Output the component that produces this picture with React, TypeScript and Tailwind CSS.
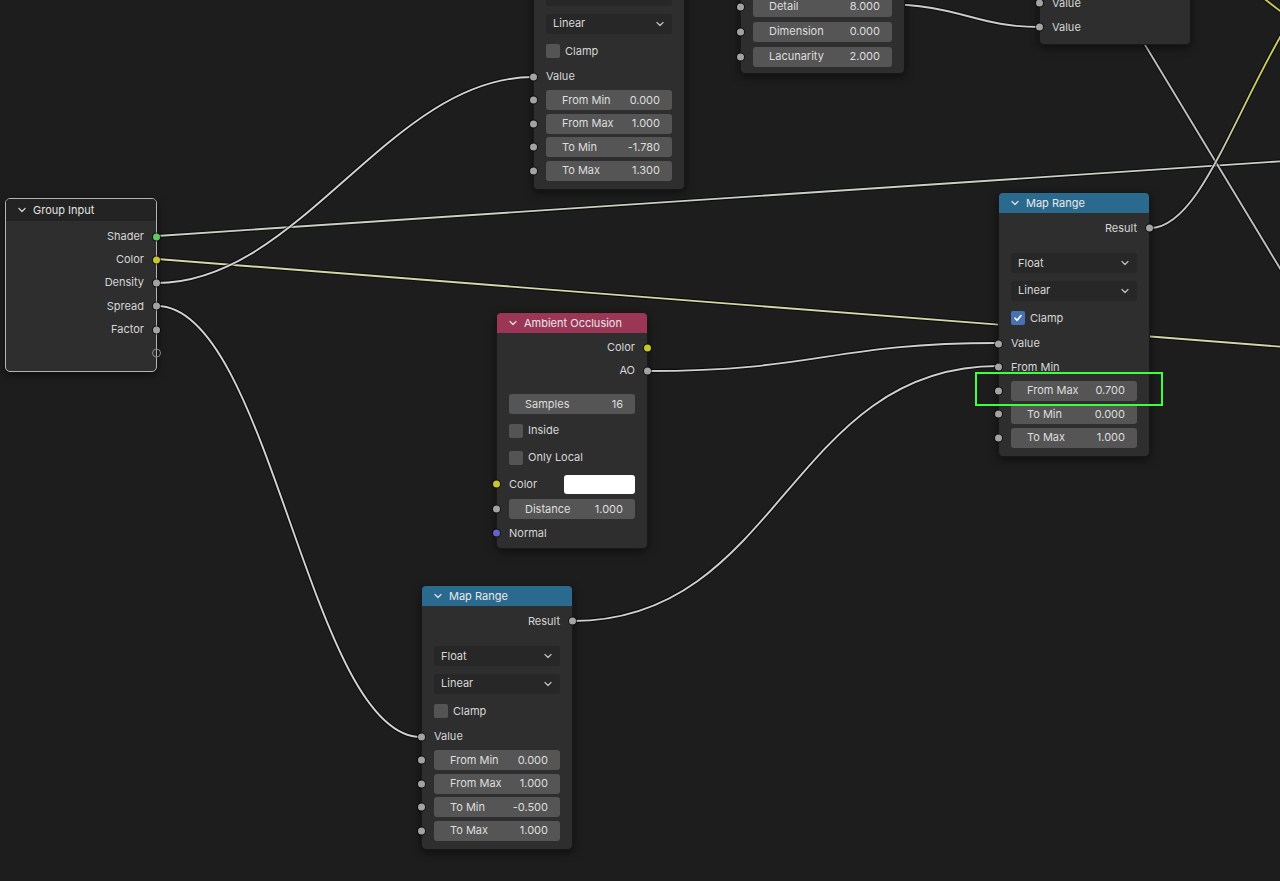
import clsx from 'clsx'

// Blender-like node editor canvas

const Chevron = ({ className }: { className?: string }) => (
  <svg width="8" height="6" viewBox="0 0 8 6" className={className}>
    <path d="M1 1.5 L4 4.5 L7 1.5" stroke="currentColor" strokeWidth="1.3" fill="none" strokeLinecap="round" strokeLinejoin="round" />
  </svg>
)

const Socket = ({ side, color = 'bg-[#a3a3a3]', hollow }: { side: 'l' | 'r'; color?: string; hollow?: boolean }) => (
  <span
    className={clsx(
      'absolute top-1/2 -translate-y-1/2 w-[7px] h-[7px] rounded-full',
      side === 'l' ? 'left-[-4px]' : 'right-[-4px]',
      hollow ? 'border border-[#8a8a8a] bg-transparent w-[9px] h-[9px] right-[-5px]' : clsx(color, 'ring-1 ring-black/60')
    )}
  />
)

const Header = ({ title, color }: { title: string; color: string }) => (
  <div className={clsx('h-5 rounded-t-[4px] flex items-center pl-3 gap-[7px] text-[#e8e8e8]', color)}>
    <Chevron className="text-[#dcdcdc]" />
    <span>{title}</span>
  </div>
)

const OutRow = ({ label, h = 'h-6', color, hollow }: { label?: string; h?: string; color?: string; hollow?: boolean }) => (
  <div className={clsx('relative flex items-center justify-end pr-3 text-[#d6d6d6]', h)}>
    {label}
    <Socket side="r" color={color} hollow={hollow} />
  </div>
)

const InRow = ({ label, h = 'h-6', color }: { label: string; h?: string; color?: string }) => (
  <div className={clsx('relative flex items-center pl-3 text-[#d6d6d6]', h)}>
    {label}
    <Socket side="l" color={color} />
  </div>
)

const Field = ({ label, value, h = 'h-6', socket = true }: { label: string; value: string; h?: string; socket?: boolean }) => (
  <div className={clsx('relative flex items-center px-3', h)}>
    {socket && <Socket side="l" />}
    <div className="h-5 w-full rounded-[3px] bg-[#555555] flex items-center justify-between pl-4 pr-3 text-[#dedede]">
      <span>{label}</span>
      <span>{value}</span>
    </div>
  </div>
)

const Drop = ({ label, h = 'h-[28px]' }: { label: string; h?: string }) => (
  <div className={clsx('flex items-center px-3', h)}>
    <div className="h-5 w-full rounded-[3px] bg-[#272727] flex items-center justify-between pl-[7px] pr-2 text-[#d8d8d8]">
      <span>{label}</span>
      <Chevron className="text-[#bdbdbd]" />
    </div>
  </div>
)

const Check = ({ label, checked, h = 'h-[26px]' }: { label: string; checked?: boolean; h?: string }) => (
  <div className={clsx('flex items-center gap-[5px] pl-3 text-[#d6d6d6]', h)}>
    <span className={clsx('w-[14px] h-[14px] rounded-[2px] flex items-center justify-center', checked ? 'bg-[#4772b3]' : 'bg-[#545454]')}>
      {checked && (
        <svg width="10" height="10" viewBox="0 0 10 10">
          <path d="M2 5.2 L4.2 7.3 L8 2.6" stroke="#fff" strokeWidth="1.6" fill="none" strokeLinecap="round" strokeLinejoin="round" />
        </svg>
      )}
    </span>
    <span>{label}</span>
  </div>
)

const Node = ({ className, children }: { className: string; children: React.ReactNode }) => (
  <div className={clsx('absolute rounded-[5px] bg-[#2e2e2e] border border-[#181818] shadow-[0_3px_8px_rgba(0,0,0,0.5)]', className)}>
    {children}
  </div>
)

const MapRange = ({ className, valueLinked, fromMinLinked, values, clamp }: {
  className: string
  valueLinked?: boolean
  fromMinLinked?: boolean
  values: [string, string, string, string]
  clamp?: boolean
}) => (
  <Node className={className}>
    <Header title="Map Range" color="bg-[#2b6a8f]" />
    <div className="pt-[3px] pb-[6px]">
      <OutRow label="Result" />
      <div className="h-[9px]" />
      <Drop label="Float" />
      <Drop label="Linear" h="h-[27px]" />
      <Check label="Clamp" checked={clamp} h="h-[28px]" />
      {valueLinked ? <InRow label="Value" h="h-[23.5px]" /> : <Field label="Value" value="1.000" h="h-[23.5px]" />}
      {fromMinLinked ? <InRow label="From Min" h="h-[23.5px]" /> : <Field label="From Min" value={values[0]} h="h-[23.5px]" />}
      <Field label="From Max" value={values[1]} h="h-[23.5px]" />
      <Field label="To Min" value={values[2]} h="h-[23.5px]" />
      <Field label="To Max" value={values[3]} h="h-[23.5px]" />
    </div>
  </Node>
)

const wires: { d: string; c: string }[] = [
  { d: 'M157,236 L1285,161', c: '#c9d2c2' },
  { d: 'M157,259 L1285,347', c: '#d6d6aa' },
  { d: 'M157,283 C300,283 390,77 533,77', c: '#d2d2d2' },
  { d: 'M157,306 C270,306 310,737 421,737', c: '#d2d2d2' },
  { d: 'M648,371 C820,371 830,343 998,343', c: '#cfcfcf' },
  { d: 'M573,621 C780,621 790,366 998,366', c: '#cfcfcf' },
  { d: 'M880,4 C960,4 975,27 1039,27', c: '#cccccc' },
  { d: 'M1130,20 L1290,285', c: '#bdbdbd' },
  { d: 'M1262,-3 L1284,14', c: '#c8c85a' },
]

export default function App() {
  return (
    <div className="relative w-[1280px] h-[881px] overflow-hidden bg-[#1d1d1d] font-[Inter,sans-serif] text-[11px] leading-none">
      <svg className="absolute inset-0" width="1280" height="881">
        <defs>
          <linearGradient id="resYellow" gradientUnits="userSpaceOnUse" x1="1150" y1="228" x2="1290" y2="20">
            <stop offset="0.35" stopColor="#c4c4c4" />
            <stop offset="0.7" stopColor="#c9c95c" />
          </linearGradient>
        </defs>
        {wires.map((w, i) => (
          <g key={i}>
            <path d={w.d} stroke="rgba(0,0,0,0.6)" strokeWidth="4" fill="none" />
            <path d={w.d} stroke={w.c} strokeWidth="1.9" fill="none" />
          </g>
        ))}
        <path d="M1150,228 C1200,228 1235,110 1290,20" stroke="rgba(0,0,0,0.6)" strokeWidth="4" fill="none" />
        <path d="M1150,228 C1200,228 1235,110 1290,20" stroke="url(#resYellow)" strokeWidth="1.9" fill="none" />
      </svg>

      {/* top center map range, mostly off screen */}
      <MapRange className="left-[533px] top-[-75px] w-[152px]" valueLinked values={['0.000', '1.000', '-1.780', '1.300']} />

      {/* musgrave-ish texture, cut at top */}
      <Node className="left-[740px] top-[-32px] w-[165px]">
        <div className="pb-1">
          <Field label="Scale" value="5.000" h="h-[25px]" />
          <Field label="Detail" value="8.000" h="h-[25px]" />
          <Field label="Dimension" value="0.000" h="h-[25px]" />
          <Field label="Lacunarity" value="2.000" h="h-[25px]" />
        </div>
      </Node>

      {/* top right node */}
      <Node className="left-[1039px] top-[-34px] w-[152px]">
        <div className="pb-[5px]">
          <InRow label="Value" />
          <InRow label="Value" />
          <InRow label="Value" />
        </div>
      </Node>

      {/* group input */}
      <div className="absolute left-[5px] top-[198px] w-[152px] rounded-[5px] bg-[#2e2e2e] border border-[#b4b4b4] shadow-[0_3px_8px_rgba(0,0,0,0.5)]">
        <div className="h-[22px] rounded-t-[4px] bg-[#232323] flex items-center pl-3 gap-[7px] text-[#e2e2e2]">
          <Chevron className="text-[#cfcfcf]" />
          <span>Group Input</span>
        </div>
        <div className="pt-[4px] pb-[7px]">
          <OutRow label="Shader" h="h-[23px]" color="bg-[#63c763]" />
          <OutRow label="Color" h="h-[23px]" color="bg-[#c7c729]" />
          <OutRow label="Density" h="h-[23.5px]" />
          <OutRow label="Spread" h="h-[23.5px]" />
          <OutRow label="Factor" h="h-[23px]" />
          <OutRow h="h-[23px]" hollow />
        </div>
      </div>

      {/* ambient occlusion */}
      <Node className="left-[496px] top-[312px] w-[152px]">
        <Header title="Ambient Occlusion" color="bg-[#9b3657]" />
        <div className="pt-[3px] pb-[3px]">
          <OutRow label="Color" h="h-[23px]" color="bg-[#c7c729]" />
          <OutRow label="AO" h="h-[23px]" />
          <div className="h-[9px]" />
          <Field label="Samples" value="16" h="h-[26px]" socket={false} />
          <Check label="Inside" h="h-[27px]" />
          <Check label="Only Local" h="h-[27px]" />
          <div className="relative flex items-center justify-between pl-3 pr-3 h-[26px] text-[#d6d6d6]">
            <Socket side="l" color="bg-[#c7c729]" />
            <span>Color</span>
            <span className="w-[71px] h-[19px] rounded-[3px] bg-white" />
          </div>
          <Field label="Distance" value="1.000" />
          <InRow label="Normal" color="bg-[#6363c7]" />
        </div>
      </Node>

      <MapRange className="left-[998px] top-[192px] w-[152px]" valueLinked fromMinLinked clamp values={['0.000', '0.700', '0.000', '1.000']} />
      <MapRange className="left-[421px] top-[585px] w-[152px]" valueLinked values={['0.000', '1.000', '-0.500', '1.000']} />

      {/* highlight annotation */}
      <div className="absolute left-[975px] top-[372px] w-[188px] h-[34px] border-2 border-[#3dff3d]" />
    </div>
  )
}
